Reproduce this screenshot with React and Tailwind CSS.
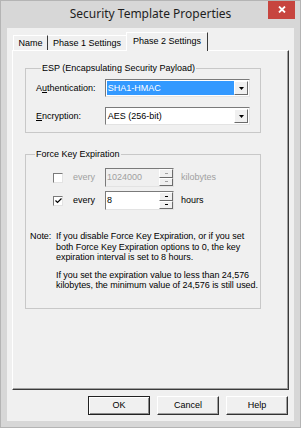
import React from 'react';

const sunken = 'border border-t-[#7a7a7a] border-l-[#7a7a7a] border-r-[#e3e3e3] border-b-[#e3e3e3]';
const raised = 'border border-t-[#ffffff] border-l-[#ffffff] border-r-[#6b6b6b] border-b-[#6b6b6b]';

const Arrow = ({ up }) => (
  <svg width="5" height="3" viewBox="0 0 5 3">
    <path d={up ? 'M2.5 0L5 3H0z' : 'M0 0h5L2.5 3z'} fill="#000" />
  </svg>
);

const Dropdown = ({ value, selected }) => (
  <div className={`w-[146px] h-[18px] bg-white flex p-[1px] ${sunken}`}>
    <div
      className={`flex-1 flex items-center pl-[1px] ${
        selected ? 'bg-[#3399ff] text-white' : 'text-black'
      }`}
    >
      {value}
    </div>
    <div className={`w-[14px] bg-[#f0f0f0] flex items-center justify-center ${raised}`}>
      <Arrow />
    </div>
  </div>
);

const Spin = ({ value, disabled }) => (
  <div
    className={`w-[69px] h-[19px] flex ${sunken} ${
      disabled ? 'bg-[#f0f0f0] text-[#a0a0a0]' : 'bg-white text-black'
    }`}
  >
    <div className="flex-1 flex items-center pl-[1px]">{value}</div>
    <div className="w-[14px] flex flex-col">
      <div className={`flex-1 bg-[#f0f0f0] flex items-center justify-center ${raised}`}>
        <div className={`w-[3px] h-[1px] ${disabled ? 'bg-[#a0a0a0]' : 'bg-black'}`} />
      </div>
      <div className={`flex-1 bg-[#f0f0f0] flex items-center justify-center ${raised}`}>
        <div className={`w-[3px] h-[1px] ${disabled ? 'bg-[#a0a0a0]' : 'bg-black'}`} />
      </div>
    </div>
  </div>
);

const Checkbox = ({ checked }) => (
  <div className={`w-[10px] h-[10px] bg-white flex items-center justify-center ${sunken}`}>
    {checked && (
      <svg width="7" height="6" viewBox="0 0 7 6">
        <path d="M0.5 2.5l2 2L6.5 0.5" stroke="#000" strokeWidth="1.2" fill="none" />
      </svg>
    )}
  </div>
);

const Button = ({ children, primary }) => (
  <div
    className={`w-[62px] h-[19px] bg-[#f0f0f0] flex items-center justify-center ${
      primary
        ? 'border border-[#222222] shadow-[inset_1px_1px_0_#ffffff,inset_-1px_-1px_0_#8a8a8a]'
        : 'border border-t-[#ffffff] border-l-[#ffffff] border-r-[#333333] border-b-[#333333] shadow-[inset_-1px_-1px_0_#a0a0a0]'
    }`}
  >
    {children}
  </div>
);

const App = () => {
  return (
    <div className="w-[301px] h-[428px] bg-[#d7d7d7] border border-[#b4b4b4] flex flex-col font-['Liberation_Sans',Arial,sans-serif] text-[9px] leading-[11px] text-black overflow-hidden">
      {/* Title bar */}
      <div className="relative h-[27px] shrink-0 flex items-center justify-center">
        <span className="font-['Noto_Sans',sans-serif] text-[12px] leading-[14px] text-[#1e1e1e] pb-[1px]">
          Security Template Properties
        </span>
        <div className="absolute right-[5px] top-[-1px] w-[27px] h-[19px] bg-[#c7453f] flex items-center justify-center">
          <svg width="8" height="7" viewBox="0 0 8 7">
            <path d="M1 0.5l6 6M7 0.5l-6 6" stroke="#fff" strokeWidth="1.8" />
          </svg>
        </div>
      </div>

      {/* Client area */}
      <div className="mx-[6px] mb-[6px] flex-1 bg-[#f0f0f0] flex flex-col px-[5px] pt-[4px]">
        {/* Tabs */}
        <div className="h-[18px] flex items-end pl-[1px]">
          <div className="w-[35px] h-[15px] border-l border-t border-l-white border-t-white border-r border-r-[#3a3a3a] flex items-center justify-center">
            Name
          </div>
          <div className="w-[78px] h-[15px] border-t border-t-white flex items-center justify-center">
            Phase 1 Settings
          </div>
          <div className="relative z-10 w-[82px] h-[19px] -mb-[1px] bg-[#f0f0f0] border-l border-t border-l-white border-t-white border-r border-r-[#3a3a3a] flex items-start justify-center pt-[3px]">
            Phase 2 Settings
          </div>
        </div>

        {/* Tab panel */}
        <div className="h-[340px] border border-t-white border-l-white border-r-[#3a3a3a] border-b-[#3a3a3a] shadow-[inset_-1px_-1px_0_#a0a0a0] px-[12px] pt-[12px]">
          <fieldset className="w-[236px] min-w-0 h-[70px] border border-[#c8c8c8] pl-[10px] pr-[10px]">
            <legend className="ml-[5px] px-[1px]">ESP (Encapsulating Security Payload)</legend>
            <div className="flex flex-col gap-[10px] pt-[5px]">
              <div className="flex items-center">
                <span className="w-[69px]">
                  A<span className="underline">u</span>thentication:
                </span>
                <Dropdown value="SHA1-HMAC" selected />
              </div>
              <div className="flex items-center">
                <span className="w-[69px]">
                  <span className="underline">E</span>ncryption:
                </span>
                <Dropdown value="AES (256-bit)" />
              </div>
            </div>
          </fieldset>

          <fieldset className="mt-[16px] w-[236px] min-w-0 h-[160px] border border-[#c8c8c8] pl-[4px] pr-0">
            <legend className="ml-[5px] px-[1px]">Force Key Expiration</legend>
            <div className="flex flex-col gap-[4px] pt-[8px] pl-[23px]">
              <div className="flex items-center">
                <Checkbox />
                <span className="ml-[10px] w-[32px] text-[#a0a0a0]">every</span>
                <Spin value="1024000" disabled />
                <span className="ml-[7px] text-[#a0a0a0]">kilobytes</span>
              </div>
              <div className="flex items-center">
                <Checkbox checked />
                <span className="ml-[10px] w-[32px]">every</span>
                <Spin value="8" />
                <span className="ml-[7px]">hours</span>
              </div>
            </div>

            <div className="mt-[21px] flex leading-[10.5px] whitespace-nowrap tracking-[-0.05px]">
              <span className="w-[26px] shrink-0">Note:</span>
              <div className="flex flex-col">
                <p>
                  If you disable Force Key Expiration, or if you set
                  <br />
                  both Force Key Expiration options to 0, the key
                  <br />
                  expiration interval is set to 8 hours.
                </p>
                <p className="mt-[7px]">
                  If you set the expiration value to less than 24,576
                  <br />
                  kilobytes, the minimum value of 24,576 is still used.
                </p>
              </div>
            </div>
          </fieldset>
        </div>

        {/* Buttons */}
        <div className="mt-[6px] flex justify-end gap-[7px] pr-[1px]">
          <Button primary>OK</Button>
          <Button>Cancel</Button>
          <Button>Help</Button>
        </div>
      </div>
    </div>
  );
};

export default App;
